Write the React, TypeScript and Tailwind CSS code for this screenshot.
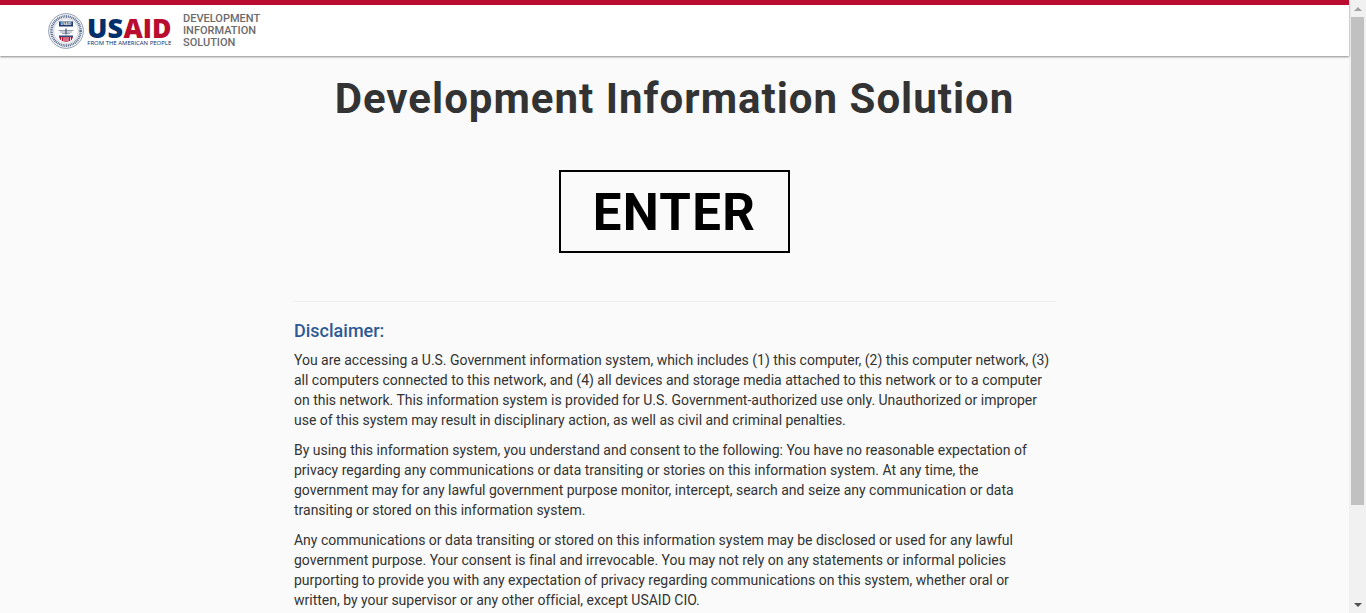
import React from 'react';

const paragraphs = [
  [
    'You are accessing a U.S. Government information system, which includes (1) this computer, (2) this computer network, (3)',
    'all computers connected to this network, and (4) all devices and storage media attached to this network or to a computer',
    'on this network. This information system is provided for U.S. Government-authorized use only. Unauthorized or improper',
    'use of this system may result in disciplinary action, as well as civil and criminal penalties.',
  ],
  [
    'By using this information system, you understand and consent to the following: You have no reasonable expectation of',
    'privacy regarding any communications or data transiting or stories on this information system. At any time, the',
    'government may for any lawful government purpose monitor, intercept, search and seize any communication or data',
    'transiting or stored on this information system.',
  ],
  [
    'Any communications or data transiting or stored on this information system may be disclosed or used for any lawful',
    'government purpose. Your consent is final and irrevocable. You may not rely on any statements or informal policies',
    'purporting to provide you with any expectation of privacy regarding communications on this system, whether oral or',
    'written, by your supervisor or any other official, except USAID CIO.',
  ],
];

/** Round USAID seal, drawn small */
function Seal() {
  return (
    <svg width="36" height="36" viewBox="0 0 36 36" className="shrink-0" aria-hidden>
      <circle cx="18" cy="18" r="17.3" fill="#fff" stroke="#7f8fa8" strokeWidth="0.9" />
      <circle cx="18" cy="18" r="14.6" fill="none" stroke="#5d6f8f" strokeWidth="2.6" strokeDasharray="1.1 0.7" />
      <circle cx="18" cy="18" r="12.4" fill="#fff" stroke="#9aa6ba" strokeWidth="0.5" />
      <rect x="11" y="8.5" width="14" height="5" fill="#1f3a70" />
      <text x="18" y="12.4" textAnchor="middle" fontSize="3.6" fontWeight="700" fill="#fff" fontFamily="'Open Sans', sans-serif">
        USAID
      </text>
      <path d="M10.5 17.5h15M12 19h12M14 20.5h8" stroke="#8a94a6" strokeWidth="0.9" />
      <path d="M18 15.5v6" stroke="#55637d" strokeWidth="1.4" />
      <rect x="11" y="22.5" width="14" height="1.4" fill="#1f3a70" />
      <path d="M11 24h14l-1 2.2a8 8 0 0 1-12 0z" fill="#ba0c2f" />
      <path d="M13.5 24.2v3M16 24.2v4M18 24.2v4.4M20 24.2v4M22.5 24.2v3" stroke="#fff" strokeWidth="0.8" />
    </svg>
  );
}

function Logo() {
  return (
    <div className="flex items-center">
      <Seal />
      <svg width="85" height="36" viewBox="0 0 85 36" overflow="visible" className="ml-[3px] shrink-0 font-['Open_Sans',sans-serif]">
        <text x="0" y="24.7" fontSize="26" fontWeight="800" fill="#002f6c" textLength="36" lengthAdjust="spacingAndGlyphs">
          US
        </text>
        <text x="36.5" y="24.7" fontSize="26" fontWeight="800" fill="#ba0c2f" textLength="48" lengthAdjust="spacingAndGlyphs">
          AID
        </text>
        <text x="0.3" y="32.3" fontSize="5.8" fill="#002f6c" textLength="84" lengthAdjust="spacingAndGlyphs">
          FROM THE AMERICAN PEOPLE
        </text>
      </svg>
    </div>
  );
}

export default function App() {
  return (
    <div className="flex h-[613px] w-[1366px] overflow-hidden bg-[#fafafa] font-['Roboto',sans-serif]">
      <div className="flex-1 min-w-0 flex flex-col">
        <header className="h-[56px] shrink-0 bg-white border-t-[5px] border-[#ba0c2f] shadow-[0_1px_2px_rgba(0,0,0,0.45)] flex items-start pl-[48px] pt-[8px] relative">
          <Logo />
          <div className="ml-[11px] text-[11px] leading-[12px] font-medium text-[#6b6b6b]">
            <div>DEVELOPMENT</div>
            <div>INFORMATION</div>
            <div>SOLUTION</div>
          </div>
        </header>

        <main className="flex-1 min-h-0 overflow-hidden flex flex-col items-center">
          <h1 className="mt-[19px] text-[42px] leading-[48px] font-bold text-[#333333] tracking-[1px] whitespace-nowrap">
            Development Information Solution
          </h1>
          <button className="mt-[47px] w-[231px] h-[83px] border-2 border-black text-black text-[51px] font-bold tracking-[1.3px] flex items-center justify-center pt-[3px]">
            ENTER
          </button>

          <section className="mt-[48px] ml-[1px] w-[762px] border-t border-[#eeeeee] pt-[19px] shrink-0">
            <h2 className="text-[18px] leading-[20px] font-medium text-[#2d5a94]">Disclaimer:</h2>
            <div className="mt-[9px] flex flex-col gap-[10px] text-[14px] leading-[20px] tracking-[-0.008px] text-[#333333]">
              {paragraphs.map((lines, i) => (
                <p key={i}>
                  {lines.map((line) => (
                    <span key={line} className="block whitespace-nowrap">
                      {line}
                    </span>
                  ))}
                </p>
              ))}
            </div>
          </section>
        </main>
      </div>

      {/* Scrollbar */}
      <div className="w-[17px] shrink-0 bg-[#f1f1f1] flex flex-col items-center">
        <div className="h-[17px] w-full flex items-center justify-center">
          <div className="w-0 h-0 border-x-[4px] border-x-transparent border-b-[4px] border-b-[#a3a3a3]" />
        </div>
        <div className="w-[13px] flex-1 min-h-0 mb-[91px] bg-[#c1c1c1]" />
        <div className="h-[17px] w-full flex items-center justify-center">
          <div className="w-0 h-0 border-x-[4px] border-x-transparent border-t-[4px] border-t-[#505050]" />
        </div>
      </div>
    </div>
  );
}
